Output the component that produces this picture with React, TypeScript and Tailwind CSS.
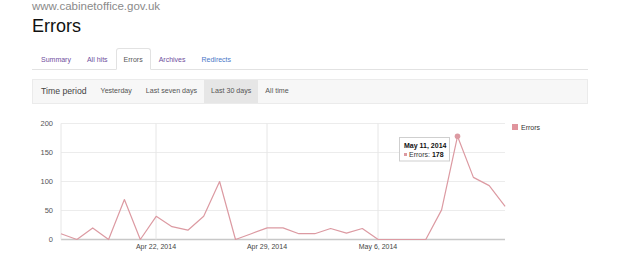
const tabs = [
  { label: 'Summary', color: 'text-[#6f4f9e]' },
  { label: 'All hits', color: 'text-[#6f4f9e]' },
  { label: 'Errors', color: 'text-[#555]', active: true },
  { label: 'Archives', color: 'text-[#6f4f9e]' },
  { label: 'Redirects', color: 'text-[#4a78c8]' },
];

const periods = ['Yesterday', 'Last seven days', 'Last 30 days', 'All time'];

const values = [10, 0, 20, 0, 69, 0, 40, 22, 16, 40, 100, 0, 10, 20, 20, 10, 10, 19, 11, 19, 0, 0, 0, 0, 51, 178, 107, 93, 57];

// chart coordinates are relative to the svg, which starts at page y=110
const X0 = 61;
const STEP = 15.86;
const Y0 = 129.5;
const PER = 0.58;
const px = (i: number) => X0 + i * STEP;
const py = (v: number) => Y0 - v * PER;

const ErrorsChart = () => {
  const line = values.map((v, i) => `${px(i).toFixed(1)},${py(v).toFixed(1)}`).join(' ');
  const font = { fontFamily: '"Liberation Sans", Arial, sans-serif' };
  return (
    <svg width="620" height="155" className="block" style={font}>
      {[0, 50, 100, 150, 200].map((v) => (
        <g key={v}>
          <line x1={X0} x2={505} y1={py(v)} y2={py(v)} stroke={v === 0 ? '#c8c8c8' : '#ececec'} strokeWidth={v === 0 ? 1.5 : 1} />
          <text x={53} y={py(v) + 2.5} fontSize="7.5" fill="#555" textAnchor="end">{v}</text>
        </g>
      ))}
      {[X0, 156, 267, 378].map((x) => (
        <line key={x} x1={x} x2={x} y1={py(200)} y2={Y0} stroke="#e6e6e6" strokeWidth="1" />
      ))}
      {[
        [156, 'Apr 22, 2014'],
        [267, 'Apr 29, 2014'],
        [378, 'May 6, 2014'],
      ].map(([x, t]) => (
        <text key={t} x={x} y={139} fontSize="7" fill="#444" textAnchor="middle">{t}</text>
      ))}
      <polyline points={line} fill="none" stroke="#dc9aa2" strokeWidth="1.2" strokeLinejoin="round" />
      <circle cx={px(25)} cy={py(178)} r="2.8" fill="#dc9aa2" />

      {/* tooltip */}
      <rect x="399.5" y="27.5" width="50" height="23.5" fill="#fff" stroke="#cfcfcf" />
      <text x="404" y="38" fontSize="7" fontWeight="bold" fill="#111">May 11, 2014</text>
      <rect x="404" y="43" width="3" height="3" fill="#dc9aa2" />
      <text x="409" y="47" fontSize="7" fill="#333">
        Errors: <tspan fontWeight="bold" fill="#111">178</tspan>
      </text>

      {/* legend */}
      <rect x="512" y="14" width="6" height="6" fill="#e0949d" />
      <text x="521" y="20" fontSize="7" fill="#333">Errors</text>
    </svg>
  );
};

export default function App() {
  return (
    <div className="w-[620px] h-[265px] bg-white overflow-hidden font-['Liberation_Sans',Arial,sans-serif]">
      <div className="px-[32px]">
        <div className="text-[11.5px] leading-[12px] text-[#8a8a8a]">www.cabinetoffice.gov.uk</div>
        <h1 className="mt-[4px] text-[18px] leading-[20px] text-[#111]">Errors</h1>

        <ul className="mt-[12px] pl-[1px] flex border-b border-[#e2e2e2]">
          {tabs.map((t) => (
            <li
              key={t.label}
              className={`-mb-px px-[7px] pt-[6px] pb-[5px] text-[7px] leading-[9px] border rounded-t-[3px] ${t.color} ${
                t.active ? 'bg-white border-[#e2e2e2] border-b-white' : 'border-transparent'
              }`}
            >
              {t.label}
            </li>
          ))}
        </ul>

        <div className="mt-[9px] h-[25px] flex items-stretch bg-[#f7f7f7] border border-[#ebebeb]">
          <div className="flex items-center pl-[8px] pr-[7px] text-[8.7px] text-[#444]">Time period</div>
          {periods.map((p) => (
            <div
              key={p}
              className={`flex items-center px-[7px] text-[7.1px] text-[#555] ${p === 'Last 30 days' ? 'bg-[#e6e6e6]' : ''}`}
            >
              {p}
            </div>
          ))}
        </div>
      </div>

      <div className="mt-[6px]">
        <ErrorsChart />
      </div>
    </div>
  );
}
